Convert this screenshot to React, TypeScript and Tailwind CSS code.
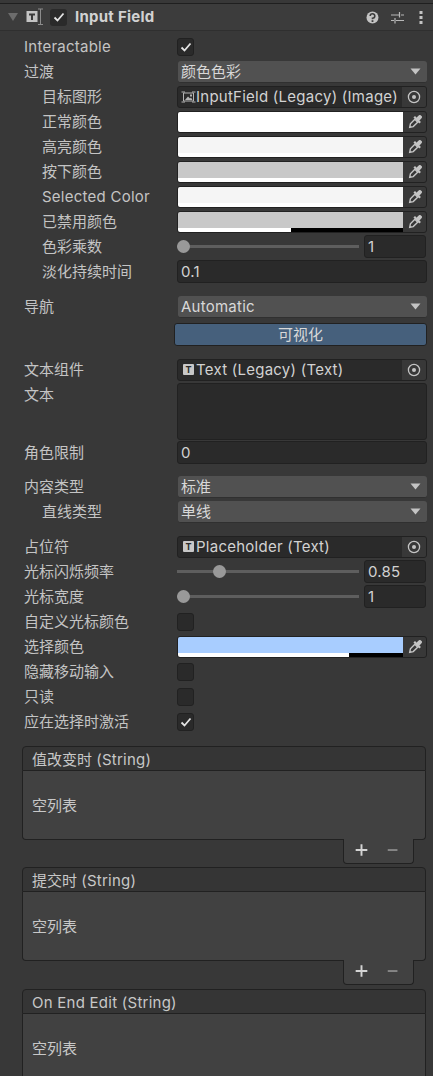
import type { ReactNode } from 'react';

const FONT = { fontFamily: 'Inter, "Noto Sans CJK SC", sans-serif' };

// latin runs in the reference are a touch wider than Inter at 15px, CJK is exactly 15px
function En({ children }: { children: ReactNode }) {
  return <span className="tracking-[0.25px]">{children}</span>;
}

function Check() {
  return (
    <svg width="12" height="10" viewBox="0 0 12 10" fill="none">
      <path d="M1.5 5.5 L4.5 8.5 L10.5 1.5" stroke="#e4e4e4" strokeWidth="1.8" />
    </svg>
  );
}

function CheckBox({ checked }: { checked?: boolean }) {
  return (
    <div className="flex h-[18px] w-[17px] items-center justify-center rounded-[3px] border border-[#212121] bg-[#2a2a2a]">
      {checked && <Check />}
    </div>
  );
}

function Row({ label, indent, children }: { label: ReactNode; indent?: boolean; children?: ReactNode }) {
  return (
    <div className="flex h-[25px] items-center pr-[6px]">
      <div className={`${indent ? 'pl-[42px]' : 'pl-[24px]'} w-[177px] shrink-0 pt-[2px] whitespace-nowrap`}>{label}</div>
      <div className="flex min-w-0 flex-1 items-center">{children}</div>
    </div>
  );
}

function Caret() {
  return (
    <svg width="11" height="7" viewBox="0 0 11 7" className="shrink-0">
      <path d="M0.5 0.5 H10.5 L5.5 6.5 Z" fill="#c4c4c4" />
    </svg>
  );
}

function Dropdown({ value }: { value: ReactNode }) {
  return (
    <div className="ml-[1px] flex h-[22px] w-[249px] items-center justify-between rounded-[3px] border-b border-[#303030] bg-[#515151] pl-[3px] pr-[6px] text-[#d8d8d8]">
      <span className="pt-[2px]">{value}</span>
      <Caret />
    </div>
  );
}

function Eyedropper() {
  return (
    <svg width="14" height="14" viewBox="0 0 14 14" fill="none">
      <g transform="rotate(45 7 7)">
        <rect x="5" y="-1.8" width="4" height="5.4" rx="1.6" fill="#c4c4c4" />
        <rect x="2.8" y="2.8" width="8.4" height="2.2" fill="#c4c4c4" />
        <path d="M5 5.2 H9 V11.5 L7 14.5 L5 11.5 Z" stroke="#c4c4c4" strokeWidth="1.4" />
      </g>
    </svg>
  );
}

function ColorField({ color, bar = 'white', alpha }: { color: string; bar?: string; alpha?: number }) {
  return (
    <div className="flex h-[22px] w-[250px] overflow-hidden rounded-[3px] border border-[#212121] bg-[#383838]">
      <div className="flex w-[225px] shrink-0 flex-col">
        <div className="h-[16px]" style={{ backgroundColor: color }} />
        <div className="h-[4px] bg-black">
          <div className="h-full" style={{ backgroundColor: bar, width: `${alpha ?? 100}%` }} />
        </div>
      </div>
      <div className="flex flex-1 items-center justify-center">
        <Eyedropper />
      </div>
    </div>
  );
}

function Target() {
  return (
    <svg width="14" height="14" viewBox="0 0 14 14" fill="none">
      <circle cx="7" cy="7" r="5.6" stroke="#c4c4c4" strokeWidth="1.3" />
      <circle cx="7" cy="7" r="2" fill="#c4c4c4" />
    </svg>
  );
}

function TextIcon() {
  return (
    <span className="mr-[2px] ml-[5px] flex h-[11px] w-[11px] shrink-0 items-center justify-center rounded-[1px] bg-[#c8c8c8] text-[9px] leading-none font-bold text-[#2a2a2a]">
      T
    </span>
  );
}

function ImageIcon() {
  return (
    <svg width="15" height="12" viewBox="0 0 15 12" fill="none" className="ml-[3px] shrink-0">
      <path d="M2.5 2 H12.5 V10 H2.5 Z" stroke="#b4b4b4" />
      <path d="M0.5 1 H4 M11 1 H14.5 M0.5 11 H4 M11 11 H14.5" stroke="#b4b4b4" />
      <path d="M4 9 L7 5.5 L9 7.5 L10 6.5 L11.5 9 Z" fill="#b4b4b4" />
      <rect x="9" y="3.5" width="2" height="2" fill="#b4b4b4" />
    </svg>
  );
}

function ObjectField({ icon, value }: { icon: ReactNode; value: string }) {
  return (
    <div className="flex h-[22px] w-[250px] items-center overflow-hidden rounded-[3px] border border-[#212121] bg-[#2a2a2a]">
      {icon}
      <span className="min-w-0 flex-1 overflow-hidden pt-[2px] tracking-[0.25px] whitespace-nowrap text-[#d2d2d2]">{value}</span>
      <div className="flex h-full w-[24px] shrink-0 items-center justify-center bg-[#383838]">
        <Target />
      </div>
    </div>
  );
}

function TextField({ value }: { value: string }) {
  return (
    <div className="flex h-[23px] w-[250px] items-center rounded-[3px] border border-[#212121] bg-[#2a2a2a] px-[3px] pt-[2px] tracking-[0.25px] text-[#d2d2d2]">
      {value}
    </div>
  );
}

function Slider({ position, value }: { position: number; value: string }) {
  return (
    <div className="flex items-center">
      <div className="relative h-[3px] w-[182px] bg-[#5e5e5e]">
        <div
          className="absolute top-[-5px] h-[13px] w-[13px] rounded-full bg-[#999999]"
          style={{ left: position }}
        />
      </div>
      <div className="ml-[5px] flex h-[23px] w-[62px] items-center rounded-[3px] border border-[#212121] bg-[#2a2a2a] px-[3px] pt-[2px] tracking-[0.25px] text-[#d2d2d2]">
        {value}
      </div>
    </div>
  );
}

function EventList({ title, className }: { title: ReactNode; className?: string }) {
  return (
    <div className={`ml-[22px] mr-[7px] flex flex-col text-[#c8c8c8] ${className ?? ''}`}>
      <div className="flex h-[25px] items-center rounded-t-[4px] border border-[#212121] bg-[#353535] pt-[4px] pl-[9px]">
        <span className="whitespace-pre">{title}</span>
      </div>
      <div className="flex h-[69px] items-center rounded-b-[4px] border border-t-0 border-[#212121] bg-[#414141] pt-[2px] pl-[9px]">
        空列表
      </div>
      <div className="mt-[-1px] mr-[12px] flex h-[25px] w-[71px] items-center self-end rounded-b-[4px] border border-t-0 border-[#212121] bg-[#414141]">
        <svg width="71" height="24" viewBox="0 0 71 24">
          <path d="M12 11 H24 M18 5 V17" stroke="#d4d4d4" strokeWidth="2" />
          <path d="M45 11 H55" stroke="#858585" strokeWidth="2" />
        </svg>
      </div>
    </div>
  );
}

function Header() {
  return (
    <div className="mt-[3px] flex h-[28px] items-center border-t border-b border-t-[#1f1f1f] border-b-[#2f2f2f] bg-[#3c3c3c] pr-[10px]">
      <svg width="10" height="8" viewBox="0 0 10 8" className="ml-[8px] shrink-0">
        <path d="M0 0 H10 L5 8 Z" fill="#6c6c6c" />
      </svg>
      <svg width="20" height="18" viewBox="0 0 20 18" className="ml-[8px] shrink-0">
        <rect x="0.5" y="3" width="11" height="11" fill="#c4c4c4" />
        <path d="M3 5.5 H9 V7.5 H7 V12 H5 V7.5 H3 Z" fill="#3c3c3c" />
        <path d="M12 1 H17 M12 16.5 H17 M14.5 1 V16.5" stroke="#8c8c8c" strokeWidth="1" />
      </svg>
      <div className="ml-[4px] flex h-[17px] w-[17px] items-center justify-center rounded-[3px] bg-[#2a2a2a]">
        <Check />
      </div>
      <span className="ml-[8px] font-bold tracking-[0.25px] text-[#d2d2d2]">Input Field</span>
      <div className="flex-1" />
      <svg width="13" height="13" viewBox="0 0 13 13">
        <circle cx="6.5" cy="6.5" r="6" fill="#c4c4c4" />
        <path d="M4.2 5 A2.3 2.2 0 1 1 6.5 7.2 V8.2" stroke="#3c3c3c" strokeWidth="1.6" fill="none" />
        <rect x="5.6" y="9.2" width="1.8" height="1.8" fill="#3c3c3c" />
      </svg>
      <svg width="13" height="13" viewBox="0 0 13 13" className="ml-[12px]">
        <path d="M0 4 H8 M10 4 H13 M0 9.5 H3 M5 9.5 H13 M8.5 1 V6.5 M4 7 V12.5" stroke="#b8b8b8" strokeWidth="1.2" />
      </svg>
      <svg width="4" height="13" viewBox="0 0 4 13" className="ml-[15px]">
        <rect x="0.5" y="0" width="3" height="3" fill="#c4c4c4" />
        <rect x="0.5" y="5" width="3" height="3" fill="#c4c4c4" />
        <rect x="0.5" y="10" width="3" height="3" fill="#c4c4c4" />
      </svg>
    </div>
  );
}

export default function App() {
  return (
    <div className="h-[1076px] w-[433px] overflow-hidden bg-[#383838] text-[15px] text-[#c4c4c4]" style={FONT}>
      <Header />

      {/* Selectable */}
      <div className="mt-[3px]">
        <Row label={<En>Interactable</En>}><CheckBox checked /></Row>
        <Row label="过渡"><Dropdown value="颜色色彩" /></Row>
        <Row label="目标图形" indent>
          <ObjectField icon={<ImageIcon />} value="InputField (Legacy) (Image)" />
        </Row>
        <Row label="正常颜色" indent><ColorField color="#ffffff" /></Row>
        <Row label="高亮颜色" indent><ColorField color="#f5f5f5" /></Row>
        <Row label="按下颜色" indent><ColorField color="#c8c8c8" /></Row>
        <Row label={<En>Selected Color</En>} indent><ColorField color="#f5f5f5" /></Row>
        <Row label="已禁用颜色" indent><ColorField color="#c8c8c8" alpha={50} /></Row>
        <Row label="色彩乘数" indent><Slider position={0} value="1" /></Row>
        <Row label="淡化持续时间" indent><TextField value="0.1" /></Row>
      </div>

      <div className="mt-[10px]">
        <Row label="导航"><Dropdown value={<En>Automatic</En>} /></Row>
        <div className="mt-[4px] mr-[6px] ml-[174px] flex h-[23px] items-center justify-center rounded-[3px] border border-[#212121] bg-[#46607c] pt-[2px] text-[#d8d8d8]">
          可视化
        </div>
      </div>

      {/* Input field */}
      <div className="mt-[11px]">
        <Row label="文本组件">
          <ObjectField icon={<TextIcon />} value="Text (Legacy) (Text)" />
        </Row>
        <div className="flex pr-[6px]">
          <div className="w-[177px] shrink-0 pt-[2px] pl-[24px]">文本</div>
          <div className="mt-[1px] h-[57px] w-[250px] rounded-[3px] border border-[#212121] bg-[#2a2a2a]" />
        </div>
        <Row label="角色限制"><TextField value="0" /></Row>
      </div>

      <div className="mt-[9px]">
        <Row label="内容类型"><Dropdown value="标准" /></Row>
        <Row label="直线类型" indent><Dropdown value="单线" /></Row>
      </div>

      <div className="mt-[10px]">
        <Row label="占位符">
          <ObjectField icon={<TextIcon />} value="Placeholder (Text)" />
        </Row>
        <Row label="光标闪烁频率"><Slider position={36} value="0.85" /></Row>
        <Row label="光标宽度"><Slider position={0} value="1" /></Row>
        <Row label="自定义光标颜色"><CheckBox /></Row>
        <Row label="选择颜色"><ColorField color="#a8cdff" alpha={76} /></Row>
        <Row label="隐藏移动输入"><CheckBox /></Row>
        <Row label="只读"><CheckBox /></Row>
        <Row label="应在选择时激活"><CheckBox checked /></Row>
      </div>

      <div className="mt-[12px] flex flex-col gap-[3px]">
        <EventList title={<>值改变时 <En>(String)</En></>} />
        <EventList title={<>提交时 <En>(String)</En></>} />
        <EventList className="mt-[1px]" title={<En>On End Edit (String)</En>} />
      </div>
    </div>
  );
}
